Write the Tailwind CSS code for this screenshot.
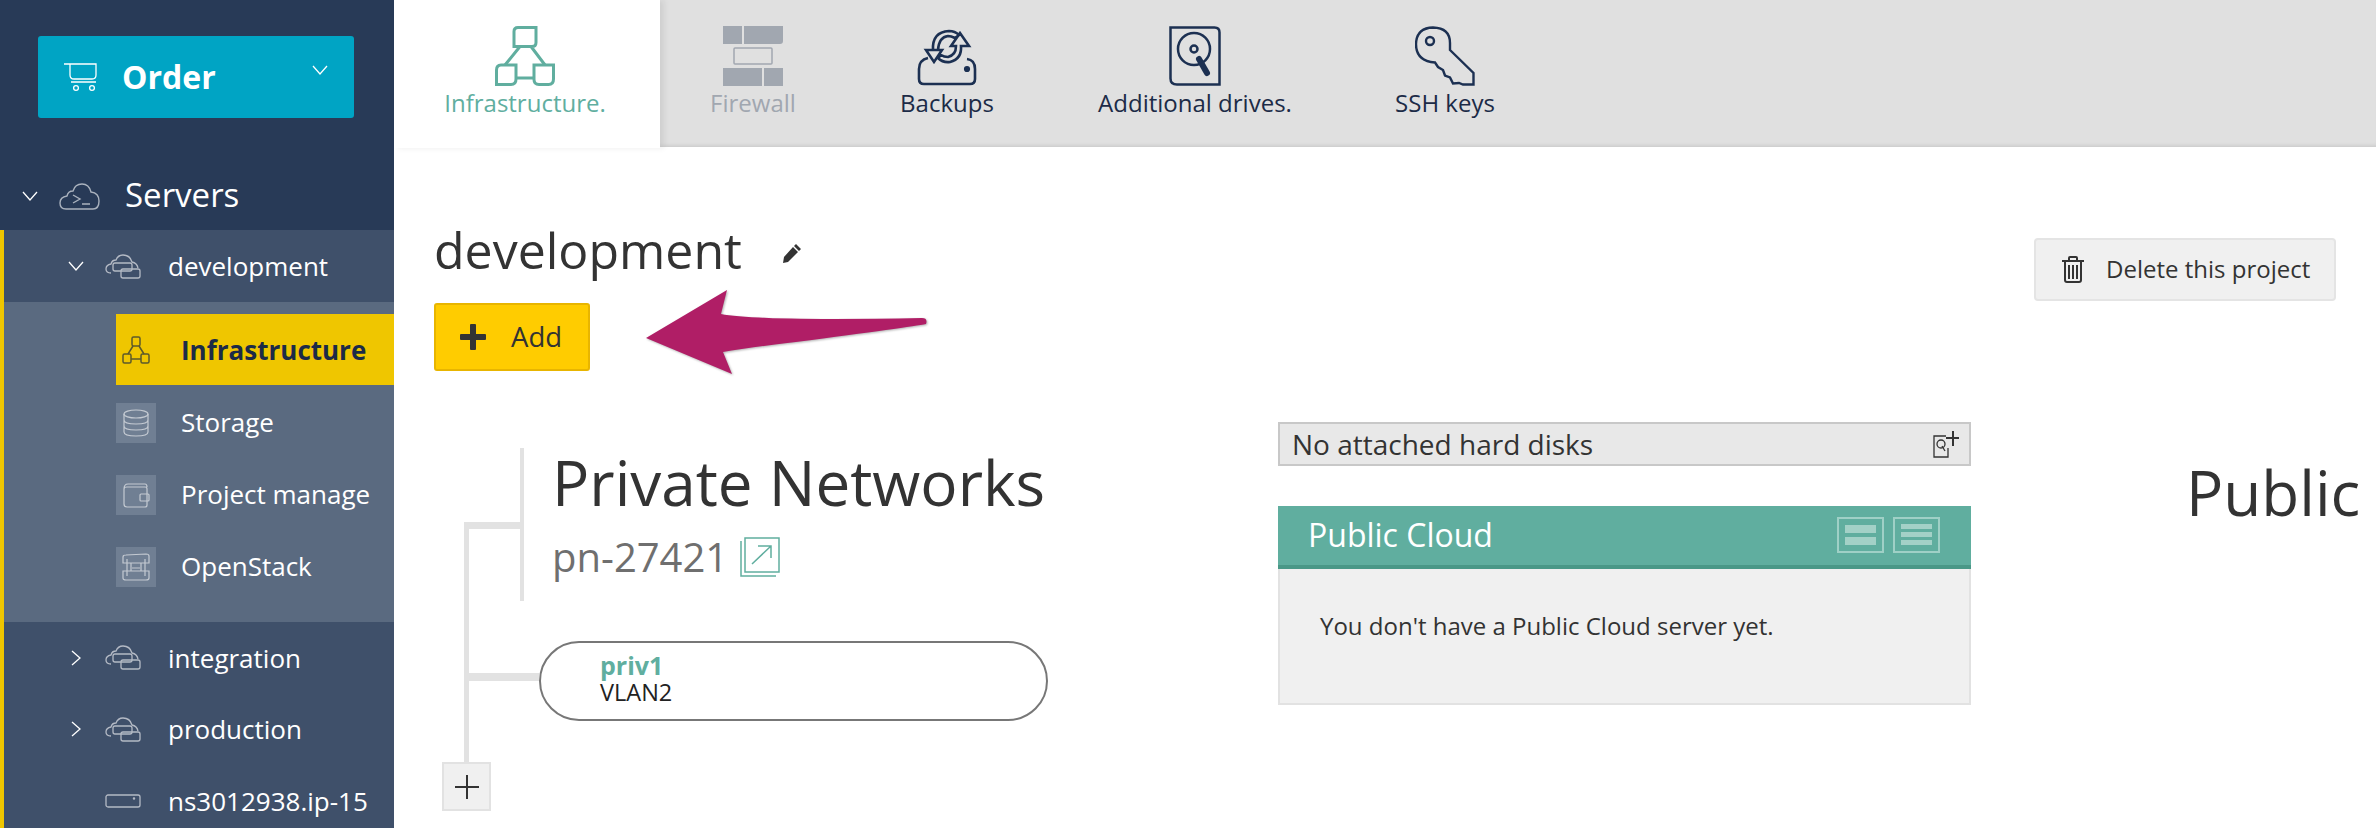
<!DOCTYPE html>
<html><head><meta charset="utf-8"><script src="https://cdn.jsdelivr.net/npm/@tailwindcss/browser@4"></script></head>
<body class="m-0 bg-white font-['Open_Sans',sans-serif]">
<div class="flex w-[2376px] h-[828px] overflow-hidden">
<!-- sidebar -->
<aside class="w-[394px] shrink-0 bg-[#283a57] flex flex-col text-white h-full">
  <div class="mt-[36px] ml-[38px] w-[316px] h-[82px] shrink-0 rounded-[3px] bg-[#00a4c4] flex items-center">
    <svg class="ml-[26px] w-[33px] h-[30px]" viewBox="0 0 33 30" fill="none" stroke="#fff" stroke-width="1.3"><path d="M0 2h32v11q0 4-4 4H10q-4 0-4-4V2M7 20h25"/><circle cx="12" cy="26" r="2.4"/><circle cx="28" cy="26" r="2.4"/></svg>
    <span class="ml-[25px] text-[32px] font-bold leading-none">Order</span>
    <svg class="ml-auto mr-[26px] mb-[14px] w-[16px] h-[10px]" viewBox="0 0 16 10" fill="none" stroke="#fff" stroke-width="1.3"><path d="M1 1l7 8 7-8"/></svg>
  </div>
  <div class="mt-[44px] h-[68px] shrink-0 flex items-center pl-[22px]">
    <svg class="w-[16px] h-[10px]" viewBox="0 0 16 10" fill="none" stroke="#fff" stroke-width="1.3"><path d="M1 1l7 8 7-8"/></svg>
    <svg class="ml-[21px] w-[41px] h-[27px]" viewBox="0 0 41 27" fill="none" stroke="#aab2be" stroke-width="1.4"><path d="M7 26q-6 0-6-6 0-6 7-7 1-5 6-5 2-7 9-7 7 0 9 8 8 1 8 9 0 8-6 8z"/><path d="M14 12l7 4-7 4M23 21h8"/></svg>
    <span class="ml-[25px] mb-[4px] text-[33px] leading-none">Servers</span>
  </div>
  <div class="border-l-[4px] border-[#efc600] flex flex-col flex-1">
    <div class="h-[72px] shrink-0 bg-[#3f506a] flex items-center pl-[64px]">
      <svg class="w-[16px] h-[10px]" viewBox="0 0 16 10" fill="none" stroke="#fff" stroke-width="1.3"><path d="M1 1l7 8 7-8"/></svg>
      <svg class="ml-[21px] w-[36px] h-[25px]" viewBox="0 0 36 25" fill="none" stroke="#b4bac5" stroke-width="1.3"><path d="M6 19q-5 0-5-4t5-5q1-4 5-4 2-5 7-5 7 0 9 7 5 1 6 6"/><rect x="8" y="9" width="19" height="8" rx="2"/><rect x="16" y="15" width="19" height="9" rx="2"/></svg>
      <span class="ml-[27px] mb-[1px] text-[26px] leading-none">development</span>
    </div>
    <div class="h-[320px] shrink-0 bg-[#5a6a80] pt-[12px] pl-[112px] flex flex-col">
      <div class="h-[71px] shrink-0 bg-[#efc600] flex items-center">
        <svg class="ml-[6px] w-[28px] h-[28px]" viewBox="0 0 28 28" fill="none" stroke="#5c5a2b" stroke-width="1.5"><rect x="10" y="1" width="8" height="9" rx="1.5"/><rect x="1" y="18" width="8" height="9" rx="1.5"/><rect x="19" y="18" width="8" height="9" rx="1.5"/><path d="M11 10l-5 8M17 10l5 8M9 23h10"/></svg>
        <span class="ml-[31px] text-[26px] font-bold leading-none text-[#1c2b47]">Infrastructure</span>
      </div>
      <div class="mt-[18px] h-[40px] shrink-0 flex items-center">
        <div class="w-[40px] h-[40px] bg-[#707f93] flex items-center justify-center"><svg class="w-[26px] h-[28px]" viewBox="0 0 26 28" fill="none" stroke="#c4cad2" stroke-width="1.2"><ellipse cx="13" cy="5" rx="12" ry="4"/><path d="M1 5v18q0 4 12 4t12-4V5M1 11q0 4 12 4t12-4M1 17q0 4 12 4t12-4"/></svg></div>
        <span class="ml-[25px] mb-[2px] text-[26px] leading-none">Storage</span>
      </div>
      <div class="mt-[32px] h-[40px] shrink-0 flex items-center">
        <div class="w-[40px] h-[40px] bg-[#707f93] flex items-center justify-center"><svg class="w-[28px] h-[26px]" viewBox="0 0 28 26" fill="none" stroke="#c4cad2" stroke-width="1.2"><path d="M2 7q0-5 4-5h17q2 0 2 3M2 7v15q0 3 3 3h18q2 0 2-2V7q0-2-2-2H5q-3 0-3 2"/><rect x="18" y="12" width="9" height="7" rx="1"/></svg></div>
        <span class="ml-[25px] mb-[2px] text-[26px] leading-none">Project manage</span>
      </div>
      <div class="mt-[32px] h-[40px] shrink-0 flex items-center">
        <div class="w-[40px] h-[40px] bg-[#707f93] flex items-center justify-center"><svg class="w-[28px] h-[28px]" viewBox="0 0 28 28" fill="none" stroke="#c4cad2" stroke-width="1.2"><path d="M1 4q0-2 3-2l20-1q3 0 3 2v7H1zM1 18h26v7q0 2-3 2H4q-3 0-3-2zM5 6v17M23 6v17M9 10v8M19 10v8M10 15h8"/></svg></div>
        <span class="ml-[25px] mb-[2px] text-[26px] leading-none">OpenStack</span>
      </div>
    </div>
    <div class="flex-1 bg-[#3f506a] flex flex-col">
      <div class="h-[71.5px] shrink-0 flex items-center pl-[67px]">
        <svg class="w-[10px] h-[16px]" viewBox="0 0 10 16" fill="none" stroke="#fff" stroke-width="1.3"><path d="M1 1l8 7-8 7"/></svg>
        <svg class="ml-[24px] w-[36px] h-[25px]" viewBox="0 0 36 25" fill="none" stroke="#b4bac5" stroke-width="1.3"><path d="M6 19q-5 0-5-4t5-5q1-4 5-4 2-5 7-5 7 0 9 7 5 1 6 6"/><rect x="8" y="9" width="19" height="8" rx="2"/><rect x="16" y="15" width="19" height="9" rx="2"/></svg>
        <span class="ml-[27px] text-[26px] leading-none">integration</span>
      </div>
      <div class="h-[71.5px] shrink-0 flex items-center pl-[67px]">
        <svg class="w-[10px] h-[16px]" viewBox="0 0 10 16" fill="none" stroke="#fff" stroke-width="1.3"><path d="M1 1l8 7-8 7"/></svg>
        <svg class="ml-[24px] w-[36px] h-[25px]" viewBox="0 0 36 25" fill="none" stroke="#b4bac5" stroke-width="1.3"><path d="M6 19q-5 0-5-4t5-5q1-4 5-4 2-5 7-5 7 0 9 7 5 1 6 6"/><rect x="8" y="9" width="19" height="8" rx="2"/><rect x="16" y="15" width="19" height="9" rx="2"/></svg>
        <span class="ml-[27px] text-[26px] leading-none">production</span>
      </div>
      <div class="h-[71.5px] shrink-0 flex items-center pl-[101px]">
        <svg class="w-[36px] h-[14px]" viewBox="0 0 36 14" fill="none" stroke="#b4bac5" stroke-width="1.3"><rect x="1" y="1" width="34" height="12" rx="2"/><circle cx="29" cy="4.5" r=".6" fill="#b4bac5"/></svg>
        <span class="ml-[27px] text-[26px] leading-none">ns3012938.ip-15</span>
      </div>
    </div>
  </div>
</aside>
<!-- main -->
<main class="flex-1 flex flex-col relative min-w-0">
  <nav class="h-[147px] shrink-0 bg-[#e0e0e0] flex shadow-[inset_0_-4px_4px_-3px_rgba(0,0,0,0.12)] text-[24px] leading-none text-[#1c2b47]">
    <div class="w-[266px] h-[148px] bg-white text-[#60ae9f] flex flex-col items-center pt-[26px] pr-[4px] shadow-[4px_0_6px_rgba(0,0,0,0.08)]">
      <svg class="w-[60px] h-[60px] shrink-0" viewBox="0 0 60 60" fill="none" stroke="#60ae9f" stroke-width="3"><path d="M23 1.500h18v15q0 4-4 4H19V5.500q0-4 4-4zM25 20.500L10 39M36 20.500L50 39"/><path d="M6 39h15v14q0 5.500-5 5.500H1.500V44q0-5 4.500-5zM39 39h19.500v14q0 5.500-5 5.500H44q-5 0-5-5zM21 52h18"/></svg>
      <span class="mt-[5px] whitespace-nowrap">Infrastructure.</span>
    </div>
    <div class="ml-[49px] w-[88px] flex flex-col items-center pt-[26px] text-[#a1a7b0]">
      <svg class="w-[60px] h-[60px] shrink-0" viewBox="0 0 60 60"><path d="M0 0h19v18H0zM21 0h39v15q0 3-3 3H21zM0 42h39v18H0zM41 42h19v18H41z" fill="#a1a7b0"/><rect x="11" y="22" width="38" height="16" rx="1" fill="none" stroke="#a1a7b0" stroke-width="1.5"/></svg>
      <span class="mt-[5px]">Firewall</span>
    </div>
    <div class="ml-[103px] flex flex-col items-center w-[94px] pt-[26px]">
      <svg class="w-[60px] h-[60px] shrink-0" viewBox="0 0 60 60" fill="none" stroke="#1c3052" stroke-width="2.600"><path d="M11 32Q2 34 2 43v10q0 5 5 5h46q5 0 5-5V43q0-9-8-10"/><path d="M16 24Q15 6 32 5q6 0 10 4l-4 3q-4-2-7-2-9 1-10 14M9 24h16l-8 12zM44 20h8L43 7l-9 13h5q0 9-8 11-4 0-7-2l-3 3q5 5 12 4 12-3 11-16z"/><circle cx="50" cy="43" r="1.800" fill="#1c3052"/></svg>
      <span class="mt-[5px]">Backups</span>
    </div>
    <div class="ml-[104px] flex flex-col items-center w-[194px] pt-[26px]">
      <svg class="w-[52px] h-[60px] shrink-0" viewBox="0 0 52 60" fill="none" stroke="#1c3052" stroke-width="2.500"><path d="M1.500 1.500h44q5 0 5 5v52H8q-6.500 0-6.500-6z"/><circle cx="25" cy="23" r="16"/><circle cx="25" cy="23" r="3.500"/><path d="M30 33l8 14" stroke-width="6" stroke-linecap="round"/></svg>
      <span class="mt-[5px] whitespace-nowrap">Additional drives.</span>
    </div>
    <div class="ml-[103px] flex flex-col items-center w-[100px] pt-[26px]">
      <svg class="w-[60px] h-[60px] shrink-0" viewBox="0 0 60 60" fill="none" stroke="#1c3052" stroke-width="2.400"><path d="M35 24L58.500 47v11.500H48L44 57l-6 0.500-3-6-5-2-2-5.500-5-3-3-4.500Q1 35 1 18 1.500 2 18 1.500 35 2 35 17z"/><circle cx="15" cy="15" r="4"/></svg>
      <span class="mt-[5px] whitespace-nowrap">SSH keys</span>
    </div>
  </nav>
  <div class="flex-1 relative pl-[40px] flex">
    <!-- left column -->
    <div class="w-[844px] shrink-0 flex flex-col">
      <div class="mt-[72px] h-[62px] flex items-center text-[#333] text-[50px] leading-none">
        <span>development</span>
        <svg class="ml-[40px] mt-[6px] w-[20px] h-[21px]" viewBox="0 0 20 21" fill="#333"><path d="M14 1l5 5-2 2-5-5zM11 4l5 5-10 10-5 1 1-6z"/></svg>
      </div>
      <button class="mt-[22px] w-[156px] h-[68px] rounded-[3px] border-[2px] border-[#e8b500] bg-[#ffcc00] flex items-center pl-[24px] text-[#333] text-[27.5px] leading-none">
        <svg class="w-[26px] h-[26px]" viewBox="0 0 26 26" fill="#333"><path d="M10 1q0-1 1-1h4q1 0 1 1v9h9q1 0 1 1v4q0 1-1 1h-9v9q0 1-1 1h-4q-1 0-1-1v-9H1q-1 0-1-1v-4q0-1 1-1h9z"/></svg>
        <span class="ml-[25px]">Add</span>
      </button>
      <div class="relative mt-[77px] flex-1">
        <div class="absolute left-[86px] top-0 w-[4px] h-[153px] bg-[#e2e2e2]"></div>
        <div class="absolute left-[30px] top-[74px] w-[60px] h-[7px] bg-[#e2e2e2]"></div>
        <div class="absolute left-[30px] top-[74px] w-[5px] h-[240px] bg-[#e2e2e2]"></div>
        <div class="absolute left-[35px] top-[225px] w-[70px] h-[8px] bg-[#e2e2e2]"></div>
        <div class="pl-[118px]">
          <div class="text-[62px] leading-[68px] text-[#333] whitespace-nowrap">Private Networks</div>
          <div class="mt-[16px] h-[50px] flex items-center text-[40px] leading-none text-[#6f6f6f]">
            <span>pn-27421</span>
            <svg class="ml-[12px] w-[40px] h-[40px]" viewBox="0 0 40 40" fill="none" stroke="#60ae9f" stroke-width="1.500"><path d="M1 4v35h35"/><rect x="5" y="1" width="34" height="34"/><path d="M12 27L31 9M18 9h13v12"/></svg>
          </div>
        </div>
        <div class="absolute left-[105px] top-[193px] w-[509px] h-[80px] rounded-[40px] border-[2px] border-[#777] bg-white pl-[59px] pt-[9px]">
          <div class="text-[#60ae9f] text-[25px] font-bold leading-[26px]">priv1</div>
          <div class="text-[#222] text-[23.500px] leading-[28px]">VLAN2</div>
        </div>
        <div class="absolute left-[8px] top-[314px] w-[49px] h-[49px] border-[2px] border-[#e2e2e2] bg-[#f0f0f0] flex items-center justify-center">
          <svg class="w-[26px] h-[26px]" viewBox="0 0 26 26" stroke="#333" stroke-width="2"><path d="M13 1v24M1 13h24"/></svg>
        </div>
      </div>
    </div>
    <!-- middle -->
    <div class="w-[693px] shrink-0 flex flex-col pt-[275px]">
      <div class="h-[44px] border-[2px] border-[#c8c8c8] bg-[#e8e8e8] flex items-center pl-[12px] pr-[10px] text-[28px] leading-none text-[#333]">
        <span class="mb-[1px]">No attached hard disks</span>
        <svg class="ml-auto w-[26px] h-[28px]" viewBox="0 0 26 28" fill="none" stroke="#333" stroke-width="1.300"><path d="M13 6H1v21h14V18"/><circle cx="8" cy="14" r="4"/><path d="M9 16l3 5"/><path d="M20 1v15M13 8h13" stroke-width="2"/></svg>
      </div>
      <div class="mt-[40px] h-[63px] bg-[#60ae9f] border-b-[4px] border-[#4a9887] flex items-center pl-[30px] pr-[31px] text-white text-[32px] leading-none">
        <span class="mb-[2px]">Public Cloud</span>
        <div class="ml-auto flex gap-[9px] mb-[2px]">
          <div class="w-[47px] h-[36px] border-[2px] border-[#9fd0c6] flex flex-col justify-center gap-[4px] px-[6px]"><div class="h-[8px] bg-[#a3d1c7]"></div><div class="h-[8px] bg-[#a3d1c7]"></div></div>
          <div class="w-[47px] h-[36px] border-[2px] border-[#9fd0c6] flex flex-col justify-center gap-[3px] px-[6px]"><div class="h-[5px] bg-[#a3d1c7]"></div><div class="h-[5px] bg-[#a3d1c7]"></div><div class="h-[5px] bg-[#a3d1c7]"></div></div>
        </div>
      </div>
      <div class="h-[136px] bg-[#f0f0f0] border-[2px] border-t-0 border-[#e2e2e2] pl-[40px] pt-[41px] text-[24px] leading-[32px] text-[#333]">You don't have a Public Cloud server yet.</div>
    </div>
    <!-- right -->
    <div class="flex-1 relative">
      <div class="absolute left-[63px] top-[91px] w-[302px] h-[63px] rounded-[4px] border-[2px] border-[#e4e4e4] bg-[#f0f0f0] flex items-center pl-[26px] text-[24px] leading-none text-[#333]">
        <svg class="w-[22px] h-[27px]" viewBox="0 0 22 27" fill="none" stroke="#333" stroke-width="2"><path d="M0 5h22M7 5V2q0-1 1-1h6q1 0 1 1v3M3 5v19q0 2 2 2h12q2 0 2-2V5M7 9v14M11 9v14M15 9v14"/></svg>
        <span class="ml-[22px] mb-[1px] whitespace-nowrap">Delete this project</span>
      </div>
      <div class="absolute left-[215px] top-[308px] text-[62px] leading-[74px] text-[#333]">Public</div>
    </div>
    <!-- arrow -->
    <svg class="absolute left-[252px] top-[138px] w-[282px] h-[92px]" style="filter:drop-shadow(1px 1px 1px rgba(0,0,0,.3))" viewBox="0 0 282 92"><path d="M0 53 L81 5 L75 29 Q110 36 276 33 Q282 33 280 39 Q265 42 150 57 Q100 63 77 67 L86 89 Z" fill="#b01e66"/></svg>
  </div>
</main>
</div>
</body></html>
